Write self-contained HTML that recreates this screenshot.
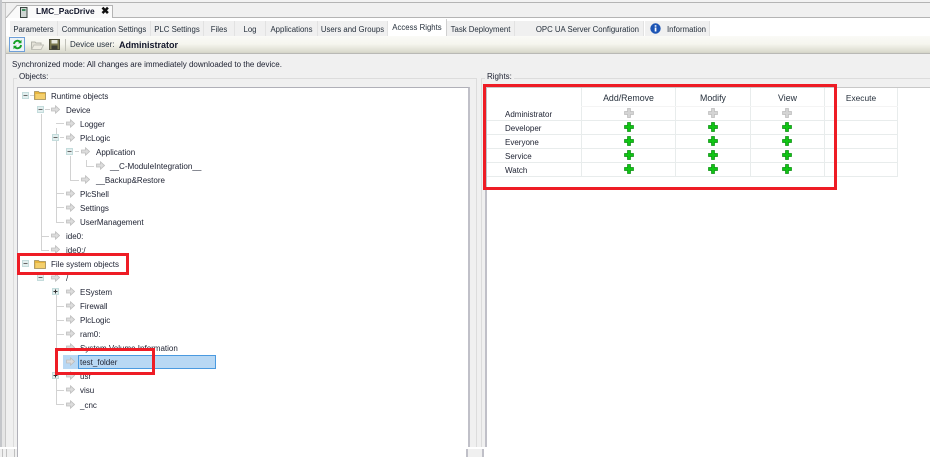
<!DOCTYPE html>
<html><head><meta charset="utf-8">
<style>
html,body{margin:0;padding:0;width:930px;height:457px;overflow:hidden;background:#f0f0f0}
#w{position:absolute;left:0;top:0;width:930px;height:457px;overflow:hidden;background:#f0f0f0;filter:blur(.35px);font-family:"Liberation Sans",sans-serif;font-size:8px;color:#1c2030}
.a,.t,.r,svg.i{position:absolute}
.t{white-space:nowrap;line-height:12px;margin-top:1px}
.n{margin-top:0}
.tab{position:absolute;top:21px;height:15px;line-height:17px;font-size:7.8px;background:#f0f0f0;border-right:1px solid #e2e2e2;text-align:center;white-space:nowrap;color:#26303c}
.r{border:3px solid #ee1c25;box-sizing:border-box}
.l{position:absolute;background:#d2d2d2}
.g{position:absolute;background:#e8ecec}
.h{position:absolute;text-align:center;line-height:12px;top:92px;color:#26303c;font-size:8.8px}
</style></head><body><div id="w">
<svg width="0" height="0" style="position:absolute"><defs>
<symbol id="ar" viewBox="0 0 9 9"><path d="M0.5 3H4.5V0.8L8.5 4.5L4.5 8.2V6H0.5Z" fill="#dcdcdc" stroke="#bdbdbd" stroke-width="0.8"/></symbol>
<symbol id="pg" viewBox="0 0 10 10"><path d="M3.5 0.5H6.5V3.5H9.5V6.5H6.5V9.5H3.5V6.5H0.5V3.5H3.5Z" fill="#10c414" stroke="#0b8f12" stroke-width="0.7"/></symbol>
<symbol id="pd" viewBox="0 0 10 10"><path d="M3.5 0.5H6.5V3.5H9.5V6.5H6.5V9.5H3.5V6.5H0.5V3.5H3.5Z" fill="#d4d4d4" stroke="#bcbcbc" stroke-width="0.7"/></symbol>
<symbol id="fo" viewBox="0 0 12 10"><path d="M0.5 1.5H4.5L5.5 2.5H11.5V9.5H0.5Z" fill="#e8b53c" stroke="#a08c58" stroke-width="0.8"/><path d="M1.5 4H11V9H1.5Z" fill="#f4cf6c"/></symbol>
<symbol id="mi" viewBox="0 0 7 7"><rect x=".5" y=".5" width="6" height="6" fill="#e2eeee" stroke="#c4dcdc"/><path d="M1.5 3.5H5.5" stroke="#666" stroke-width="1"/></symbol>
<symbol id="pl" viewBox="0 0 7 7"><rect x=".5" y=".5" width="6" height="6" fill="#e2eeee" stroke="#c4dcdc"/><path d="M1.5 3.5H5.5M3.5 1.5V5.5" stroke="#333" stroke-width="1"/></symbol>
</defs></svg>

<!-- window frame -->
<div class="a" style="left:0;top:0;width:930px;height:2px;background:#f2f2f2;border-bottom:1px solid #b4b4b4"></div>
<div class="a" style="left:0;top:0;width:2px;height:457px;background:#c4c6ca"></div>
<div class="a" style="left:5px;top:3px;width:1px;height:445px;background:#c8c8c8"></div>
<div class="a" style="left:2px;top:3px;width:3px;height:445px;background:#e6e6e6"></div>

<!-- document tab strip -->
<div class="a" style="left:6px;top:17px;width:924px;height:1px;background:#b4b4b4"></div>
<svg class="i" style="left:6px;top:4px" width="108" height="15"><path d="M0 14L11 1.5H106.500V14" fill="#fafafa" stroke="#b4b4b4"/></svg>
<svg class="i" style="left:20px;top:7px" width="8" height="11"><rect x=".5" y=".5" width="6.500" height="10" fill="#cfd5d2" stroke="#3b4440"/><rect x="2" y="2" width="3.500" height="2" fill="#3f8f5f"/></svg>
<div class="t n" style="left:36px;top:5px;font-weight:bold;font-size:8.4px;color:#12162a">LMC_PacDrive</div>
<div class="t n" style="left:101px;top:6px;font-weight:bold;font-size:10px;color:#111">✖</div>

<!-- sub tabs -->
<div class="a" style="left:6px;top:18px;width:924px;height:18px;background:#fff"></div>
<div class="tab" style="left:10px;width:47px">Parameters</div>
<div class="tab" style="left:58px;width:92px">Communication Settings</div>
<div class="tab" style="left:151px;width:52px">PLC Settings</div>
<div class="tab" style="left:204px;width:30px">Files</div>
<div class="tab" style="left:235px;width:30px">Log</div>
<div class="tab" style="left:266px;width:51px">Applications</div>
<div class="tab" style="left:318px;width:69px">Users and Groups</div>
<div class="tab" style="left:388px;top:19px;height:17px;line-height:17px;width:58px;background:#fff;border-right:1px solid #d0d0d0">Access Rights</div>
<div class="tab" style="left:447px;width:67px">Task Deployment</div>
<div class="tab" style="left:515px;width:129px;text-align:right;padding-right:4px;box-sizing:border-box">OPC UA Server Configuration</div>
<div class="tab" style="left:645px;width:65px;text-align:right;padding-right:3px;box-sizing:border-box">Information</div>
<svg class="i" style="left:650px;top:23px" width="11" height="11"><circle cx="5.500" cy="5.500" r="5.200" fill="#1d55b5"/><rect x="4.700" y="4.500" width="1.700" height="4" fill="#fff"/><rect x="4.700" y="2.200" width="1.700" height="1.500" fill="#fff"/></svg>

<!-- toolbar -->
<div class="a" style="left:6px;top:36px;width:924px;height:18px;background:linear-gradient(#fafaf6,#f5f5ee 45%,#d9d9cc 92%,#a8a8a8)"></div>
<div class="a" style="left:9px;top:37px;width:16px;height:15px;box-sizing:border-box;border:1px solid #6f9fd8;background:#eef3f8"></div>
<svg class="i" style="left:12px;top:39px" width="11" height="11" viewBox="0 0 11 11"><path d="M2 5A3.500 3.500 0 0 1 8 2.800M9 6A3.500 3.500 0 0 1 3 8.200" fill="none" stroke="#12a024" stroke-width="1.900"/><path d="M9.500 .8V4.300H6ZM1.500 10.200V6.700H5Z" fill="#12a024"/></svg>
<svg class="i" style="left:31px;top:40px" width="13" height="10"><path d="M.5 2H4L5 3H10V9.500H.5Z" fill="#e4e2d8" stroke="#b4b4ac"/><path d="M3 5H12.500L10 9.500H.5Z" fill="#efede4" stroke="#c0c0b8"/></svg>
<svg class="i" style="left:49px;top:39px" width="11" height="11"><rect x=".5" y=".5" width="10" height="10" fill="#7d7a50" stroke="#4e4e3c"/><rect x="2.500" y="1" width="6" height="3.500" fill="#e9e9df"/><rect x="2.500" y="6.500" width="6" height="4" fill="#3d3d34"/></svg>
<div class="a" style="left:65px;top:39px;width:1px;height:12px;background:#c0c0b8"></div>
<div class="t n" style="left:70px;top:39px;color:#26303c">Device user:</div>
<div class="t n" style="left:119px;top:39px;font-weight:bold;font-size:9px;color:#12162a">Administrator</div>

<div class="t" style="left:12px;top:58px">Synchronized mode: All changes are immediately downloaded to the device.</div>

<!-- group boxes -->
<div class="a" style="left:13px;top:78px;width:464px;height:379px;box-sizing:border-box;border:1px solid #dcdcdc;border-bottom:0"></div>
<div class="t" style="left:17px;top:70px;background:#f0f0f0;padding:0 2px 0 2px">Objects:</div>
<div class="a" style="left:481px;top:78px;width:449px;height:379px;box-sizing:border-box;border:1px solid #dcdcdc;border-bottom:0;border-right:0"></div>
<div class="t" style="left:485px;top:70px;background:#f0f0f0;padding:0 2px 0 2px">Rights:</div>

<!-- tree box -->
<div class="a" style="left:17px;top:87px;width:453px;height:370px;box-sizing:border-box;background:#fff;border:1px solid #b0b0b8;border-right:2px solid #c0c0c8;border-bottom:0"></div>

<!-- tree lines -->
<div class="l" style="left:41px;top:114px;width:1px;height:136px"></div>
<div class="l" style="left:56px;top:128px;width:1px;height:94px"></div>
<div class="l" style="left:70px;top:156px;width:1px;height:24px"></div>
<div class="l" style="left:86px;top:160px;width:1px;height:6px"></div>
<div class="l" style="left:56px;top:295px;width:1px;height:110px"></div>
<div class="l" style="left:30px;top:95px;width:4px;height:1px"></div>
<div class="l" style="left:45px;top:109px;width:5px;height:1px"></div>
<div class="l" style="left:56px;top:123px;width:8px;height:1px"></div>
<div class="l" style="left:60px;top:137px;width:4px;height:1px"></div>
<div class="l" style="left:75px;top:151px;width:4px;height:1px"></div>
<div class="l" style="left:86px;top:166px;width:8px;height:1px"></div>
<div class="l" style="left:70px;top:180px;width:9px;height:1px"></div>
<div class="l" style="left:56px;top:193px;width:8px;height:1px"></div>
<div class="l" style="left:56px;top:207px;width:8px;height:1px"></div>
<div class="l" style="left:56px;top:222px;width:8px;height:1px"></div>
<div class="l" style="left:41px;top:236px;width:8px;height:1px"></div>
<div class="l" style="left:41px;top:250px;width:8px;height:1px"></div>
<div class="l" style="left:56px;top:306px;width:8px;height:1px"></div>
<div class="l" style="left:56px;top:320px;width:8px;height:1px"></div>
<div class="l" style="left:56px;top:334px;width:8px;height:1px"></div>
<div class="l" style="left:56px;top:390px;width:8px;height:1px"></div>
<div class="l" style="left:56px;top:404px;width:8px;height:1px"></div>

<!-- expanders -->
<svg class="i" style="left:22px;top:92px" width="7" height="7"><use href="#mi"/></svg>
<svg class="i" style="left:37px;top:106px" width="7" height="7"><use href="#mi"/></svg>
<svg class="i" style="left:52px;top:134px" width="7" height="7"><use href="#mi"/></svg>
<svg class="i" style="left:66px;top:148px" width="7" height="7"><use href="#mi"/></svg>
<svg class="i" style="left:22px;top:260px" width="7" height="7"><use href="#mi"/></svg>
<svg class="i" style="left:37px;top:274px" width="7" height="7"><use href="#mi"/></svg>
<svg class="i" style="left:52px;top:288px" width="7" height="7"><use href="#pl"/></svg>
<svg class="i" style="left:52px;top:372px" width="7" height="7"><use href="#pl"/></svg>

<!-- folders -->
<svg class="i" style="left:34px;top:90px" width="12" height="10"><use href="#fo"/></svg>
<svg class="i" style="left:34px;top:259px" width="12" height="10"><use href="#fo"/></svg>

<!-- arrows -->
<svg class="i" style="left:51px;top:105px" width="9" height="9"><use href="#ar"/></svg>
<svg class="i" style="left:66px;top:119px" width="9" height="9"><use href="#ar"/></svg>
<svg class="i" style="left:66px;top:133px" width="9" height="9"><use href="#ar"/></svg>
<svg class="i" style="left:81px;top:147px" width="9" height="9"><use href="#ar"/></svg>
<svg class="i" style="left:96px;top:161px" width="9" height="9"><use href="#ar"/></svg>
<svg class="i" style="left:81px;top:175px" width="9" height="9"><use href="#ar"/></svg>
<svg class="i" style="left:66px;top:189px" width="9" height="9"><use href="#ar"/></svg>
<svg class="i" style="left:66px;top:203px" width="9" height="9"><use href="#ar"/></svg>
<svg class="i" style="left:66px;top:217px" width="9" height="9"><use href="#ar"/></svg>
<svg class="i" style="left:51px;top:231px" width="9" height="9"><use href="#ar"/></svg>
<svg class="i" style="left:51px;top:245px" width="9" height="9"><use href="#ar"/></svg>
<svg class="i" style="left:51px;top:273px" width="9" height="9"><use href="#ar"/></svg>
<svg class="i" style="left:66px;top:287px" width="9" height="9"><use href="#ar"/></svg>
<svg class="i" style="left:66px;top:301px" width="9" height="9"><use href="#ar"/></svg>
<svg class="i" style="left:66px;top:315px" width="9" height="9"><use href="#ar"/></svg>
<svg class="i" style="left:66px;top:329px" width="9" height="9"><use href="#ar"/></svg>
<svg class="i" style="left:66px;top:343px" width="9" height="9"><use href="#ar"/></svg>

<!-- selection -->
<div class="a" style="left:63px;top:355px;width:15px;height:14px;background:#b8d8f4"></div>
<div class="a" style="left:78px;top:355px;width:138px;height:14px;box-sizing:border-box;background:#b8d8f4;border:1px solid #4a9ae0"></div>
<svg class="i" style="left:66px;top:357px" width="9" height="9"><use href="#ar"/></svg>
<svg class="i" style="left:66px;top:371px" width="9" height="9"><use href="#ar"/></svg>
<svg class="i" style="left:66px;top:385px" width="9" height="9"><use href="#ar"/></svg>
<svg class="i" style="left:66px;top:400px" width="9" height="9"><use href="#ar"/></svg>

<!-- tree text -->
<div class="t" style="left:51px;top:90px">Runtime objects</div>
<div class="t" style="left:66px;top:104px">Device</div>
<div class="t" style="left:80px;top:118px">Logger</div>
<div class="t" style="left:80px;top:132px">PlcLogic</div>
<div class="t" style="left:96px;top:146px">Application</div>
<div class="t" style="left:110px;top:160px;font-size:8.100px">__C-ModuleIntegration__</div>
<div class="t" style="left:96px;top:174px">__Backup&amp;Restore</div>
<div class="t" style="left:80px;top:188px">PlcShell</div>
<div class="t" style="left:80px;top:202px">Settings</div>
<div class="t" style="left:80px;top:216px">UserManagement</div>
<div class="t" style="left:66px;top:230px">ide0:</div>
<div class="t" style="left:66px;top:244px">ide0:/</div>
<div class="t" style="left:51px;top:258px">File system objects</div>
<div class="t" style="left:66px;top:272px">/</div>
<div class="t" style="left:80px;top:286px">ESystem</div>
<div class="t" style="left:80px;top:300px">Firewall</div>
<div class="t" style="left:80px;top:314px">PlcLogic</div>
<div class="t" style="left:80px;top:328px">ram0:</div>
<div class="t" style="left:80px;top:342px">System Volume Information</div>
<div class="t" style="left:80px;top:356px">test_folder</div>
<div class="t" style="left:80px;top:370px">usr</div>
<div class="t" style="left:80px;top:384px">visu</div>
<div class="t" style="left:80px;top:399px">_cnc</div>

<!-- rights panel -->
<div class="a" style="left:485px;top:87px;width:445px;height:370px;box-sizing:border-box;background:#fff;border-left:2px solid #c0c0c8;border-top:1px solid #c8c8c8"></div>
<div class="g" style="left:581px;top:88px;width:1px;height:89px"></div>
<div class="g" style="left:675px;top:88px;width:1px;height:89px"></div>
<div class="g" style="left:750px;top:88px;width:1px;height:89px"></div>
<div class="g" style="left:824px;top:88px;width:1px;height:89px"></div>
<div class="g" style="left:897px;top:88px;width:1px;height:89px"></div>
<div class="g" style="left:581px;top:106px;width:317px;height:1px;background:#f4f4f4"></div>
<div class="g" style="left:487px;top:120px;width:411px;height:1px"></div>
<div class="g" style="left:487px;top:134px;width:411px;height:1px"></div>
<div class="g" style="left:487px;top:148px;width:411px;height:1px"></div>
<div class="g" style="left:487px;top:162px;width:411px;height:1px"></div>
<div class="g" style="left:487px;top:176px;width:411px;height:1px"></div>
<div class="h" style="left:582px;width:93px">Add/Remove</div>
<div class="h" style="left:676px;width:74px">Modify</div>
<div class="h" style="left:751px;width:73px">View</div>
<div class="h" style="left:825px;width:72px;font-size:8.400px">Execute</div>
<div class="t" style="left:505px;top:108px">Administrator</div>
<div class="t" style="left:505px;top:122px">Developer</div>
<div class="t" style="left:505px;top:136px">Everyone</div>
<div class="t" style="left:505px;top:150px">Service</div>
<div class="t" style="left:505px;top:164px">Watch</div>

<svg class="i" style="left:624px;top:108px" width="10" height="10"><use href="#pd"/></svg>
<svg class="i" style="left:708px;top:108px" width="10" height="10"><use href="#pd"/></svg>
<svg class="i" style="left:782px;top:108px" width="10" height="10"><use href="#pd"/></svg>
<svg class="i" style="left:624px;top:122px" width="10" height="10"><use href="#pg"/></svg>
<svg class="i" style="left:708px;top:122px" width="10" height="10"><use href="#pg"/></svg>
<svg class="i" style="left:782px;top:122px" width="10" height="10"><use href="#pg"/></svg>
<svg class="i" style="left:624px;top:136px" width="10" height="10"><use href="#pg"/></svg>
<svg class="i" style="left:708px;top:136px" width="10" height="10"><use href="#pg"/></svg>
<svg class="i" style="left:782px;top:136px" width="10" height="10"><use href="#pg"/></svg>
<svg class="i" style="left:624px;top:150px" width="10" height="10"><use href="#pg"/></svg>
<svg class="i" style="left:708px;top:150px" width="10" height="10"><use href="#pg"/></svg>
<svg class="i" style="left:782px;top:150px" width="10" height="10"><use href="#pg"/></svg>
<svg class="i" style="left:624px;top:164px" width="10" height="10"><use href="#pg"/></svg>
<svg class="i" style="left:708px;top:164px" width="10" height="10"><use href="#pg"/></svg>
<svg class="i" style="left:782px;top:164px" width="10" height="10"><use href="#pg"/></svg>

<!-- bottom break: left strip and divider strip -->
<div class="a" style="left:0;top:447px;width:17px;height:2px;background:#fff"></div>
<div class="a" style="left:0;top:449px;width:17px;height:8px;background:#f0f0f0"></div>
<div class="a" style="left:2px;top:449px;width:1px;height:8px;background:#c0c0c0"></div>
<div class="a" style="left:6px;top:449px;width:1px;height:8px;background:#c0c0c0"></div>
<div class="a" style="left:14px;top:449px;width:1px;height:8px;background:#c0c0c0"></div>
<div class="a" style="left:466px;top:447px;width:24px;height:10px;background:#fff"></div>
<div class="a" style="left:466px;top:449px;width:18px;height:8px;background:#f0f0f0;border-left:2px solid #c0c0c8;border-right:2px solid #c0c0c8;box-sizing:border-box"></div>

<!-- red annotations -->
<div class="r" style="left:483px;top:84px;width:354px;height:106px"></div>
<div class="r" style="left:17px;top:253px;width:112px;height:22px"></div>
<div class="r" style="left:55px;top:348px;width:100px;height:27px"></div>
</div></body></html>
